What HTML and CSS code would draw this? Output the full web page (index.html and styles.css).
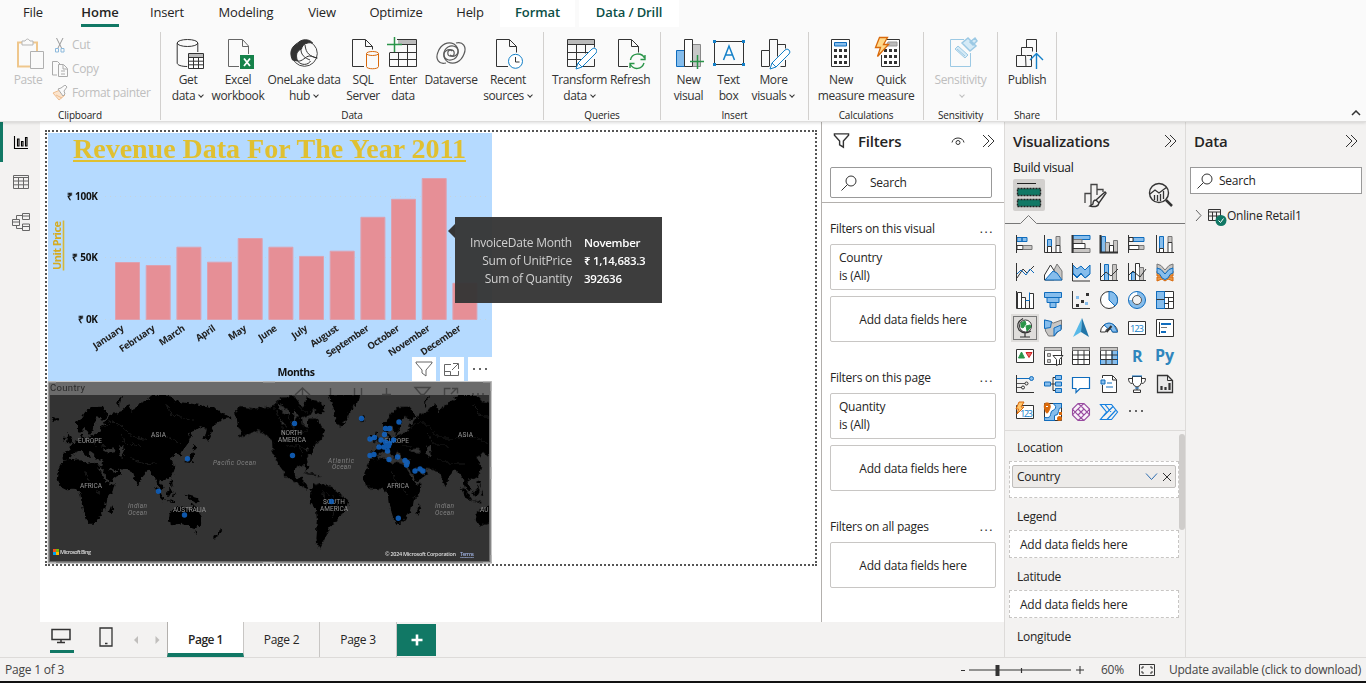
FILE: index.html
```
<!DOCTYPE html>
<html lang="en">
<head>
<meta charset="utf-8">
<title>Revenue report</title>
<link rel="stylesheet" href="styles.css">
</head>
<body>
<div class="app">
<header class="ribbon">
  <nav class="tabs">
    <span class="tab w66">File</span><span class="tab w68 active"><b>Home</b></span><span class="tab w66">Insert</span><span class="tab w92">Modeling</span><span class="tab w60">View</span><span class="tab w88">Optimize</span><span class="tab w60">Help</span><span class="tab w75 context">Format</span><span class="tab w100 context">Data / Drill</span>
  </nav>
  <div class="groups">
    <section class="group g-clip">
      <div class="tools disabled">
        <div class="tool w56"><svg class="ic" viewBox="11 36 34 34"><path d="M22 42.500H18v24h12M33 42.500h4V51" stroke="#efc78d" stroke-width="2"/><path d="M22 45v-4h3q2.500-4 5 0h3v4z" stroke="#b5b5b5"/><path d="M30.500 51.500h13v17h-13z" stroke="#b0b0b0" fill="#fafafa"/></svg><span>Paste</span></div>
        <div class="mini">
          <div><svg class="mi" viewBox="52 36 16 16"><path d="M56.500 37l5 10M63 37l-5 10" stroke="#999"/><path d="M55.500 47.500h3v3.500h-3zM61 47.500h3v3.500h-3z" stroke="#8cb9dc"/></svg>Cut</div>
          <div><svg class="mi" viewBox="52 60 16 16"><path d="M57 74h-4.500V60.500h5l3 3M58.500 63.500h5l4 4v8h-9zM63 64v4h4M61 70h4M61 73h4" stroke="#aaa"/></svg>Copy</div>
          <div><svg class="mi" viewBox="52 84 16 16"><path d="M53 92l7-3 5 5-6 5zM56 94l6 3" stroke="#efbd8e" fill="#fbe4cd"/><path d="M58 88l3-1 4-3 2 2-3 4 1 3-2 2z" stroke="#aaa" fill="#fafafa"/></svg>Format painter</div>
        </div>
      </div>
      <footer>Clipboard</footer>
    </section>
    <section class="group g-data">
      <div class="tools">
        <div class="tool w50"><svg class="ic" viewBox="172 36 34 34"><ellipse cx="188.500" cy="43" rx="10.300" ry="3.500"/><path d="M178.200 43v20c0 2 4 3.500 10 3.500M198.800 43v9"/><path d="M189.500 53.500h15v15h-15z" fill="#fff"/><path d="M190 54h14v3h-14z" fill="#bbb" stroke="none"/><path d="M189.500 57.500h15M189.500 61.200h15M189.500 64.800h15M194.500 57v11.500M199.500 57v11.500"/></svg><span>Get<br>data<i></i></span></div>
        <div class="tool w50"><svg class="ic" viewBox="221 36 34 34"><path d="M239 66.500h-10.500v-27h14l6 6.500v8M242.500 40v6.500h6" stroke="#666"/><path d="M240 55h14v14h-14z" fill="#15824a" stroke="none"/><path d="M244 58.500l6 7.500M250 58.500l-6 7.500" stroke="#fff" stroke-width="1.800"/></svg><span>Excel<br>workbook</span></div>
        <div class="tool w82"><svg class="ic" viewBox="288 36 34 34"><circle cx="305.500" cy="53.500" r="12.800" stroke="#444"/><path d="M293.500 60c-4-8 0-15 5-16 3-6 13-5 15-1-5-1-10 1-11 6-5 2-6 6-4 12z" fill="#333"/><path d="M302 47c-1 8 4 11 9 13M306 45c1 9 5 11 12 13M298.500 61c5 1 8-5 12-5 3 0 5 2 8 2M298.500 61c4 5 11 4 13 0"/></svg><span>OneLake data<br>hub<i></i></span></div>
        <div class="tool w36"><svg class="ic" viewBox="346 36 34 34"><path d="M364 66.500h-11.500v-27h13l7 7v3M365.500 40v6.500h7"/><g stroke="#d9690b" fill="#fafafa"><path d="M366.500 53.500v13c0 3 12 3 12 0v-13"/><ellipse cx="372.500" cy="53.500" rx="6" ry="2"/></g></svg><span>SQL<br>Server</span></div>
        <div class="tool w44"><svg class="ic" viewBox="386 36 34 34"><path d="M398 40h19v4h-19z" fill="#bbb" stroke="none"/><path d="M397 39.500h19.500v27h-27V53M397 44.500h19.500M389.500 52.500h27M389.500 59.500h27M398.500 52v14.500M407.500 44.500v22"/><path d="M394.500 37v15M387 44.500h15" stroke="#2a9549" stroke-width="1.500"/></svg><span>Enter<br>data</span></div>
        <div class="tool w52"><svg class="ic" viewBox="434 36 34 34"><g stroke="#5a5a5a" stroke-width="1.200"><path d="M446 63c-7 2-11-4-8-11 3-8 10-11 16-8 6 4 5 12 0 15-4 2-9 1-10-3-1-5 5-8 8-5"/><path d="M456 43c7-2 11 4 8 11-3 8-10 11-16 8-6-4-5-12 0-15 4-2 9-1 10 3 1 5-5 8-8 5"/><circle cx="451" cy="53" r="3.200"/></g></svg><span>Dataverse</span></div>
        <div class="tool w62"><svg class="ic" viewBox="491 36 34 34"><path d="M508 66.500h-11.500v-27h13l7 7v6M509.500 40v6.500h7"/><circle cx="515.500" cy="61.300" r="7" stroke="#1480c8" fill="#fff"/><path d="M515.500 57v5h4"/></svg><span>Recent<br>sources<i></i></span></div>
      </div>
      <footer>Data</footer>
    </section>
    <section class="group g-query">
      <div class="tools">
        <div class="tool w56"><svg class="ic" viewBox="563 36 34 34"><path d="M568 40h27v4h-27z" fill="#bbb" stroke="none"/><path d="M567.500 39.500h27v8M594.500 59v7.500h-27v-27M567.500 44.500h27M567.500 52.500h21M567.500 59.500h14M576.500 44.500v22M585.500 44.500v9"/><path d="M576 69l2-6 14-14q2-2 4 0t0 4l-14 14zM578 63l4 4" stroke="#1480c8" fill="#fff"/></svg><span>Transform<br>data<i></i></span></div>
        <div class="tool w45"><svg class="ic" viewBox="614 36 34 34"><path d="M629 66.500h-9.500v-27h13l7 7v6M632.500 40v6.500h7"/><path d="M631.500 60c1-7 11-8 14-2M646 55v4.500h-4.500M645 63c-2 6-10 8-14 1M631 68v-4.500h4.500" stroke="#2a9549" stroke-width="1.400"/></svg><span>Refresh</span></div>
      </div>
      <footer>Queries</footer>
    </section>
    <section class="group g-insert">
      <div class="tools">
        <div class="tool w40"><svg class="ic" viewBox="672 36 34 34"><path d="M676.500 50.500h8v16h-8z" fill="#86bdec" stroke="#0f6cbd"/><path d="M692.500 44.500h8v22h-8z" fill="#c8c8c8" stroke="#888"/><path d="M684.500 39.500h8v27h-8z" fill="#fff"/><path d="M697.500 55v14M690 61.500h14" stroke="#2a9549" stroke-width="1.500"/></svg><span>New<br>visual</span></div>
        <div class="tool w40"><svg class="ic" viewBox="712 36 34 34"><path d="M714.500 41.500h29v23h-29z"/><path d="M723.500 60l5.500-14 5.500 14M725.500 55h7" stroke="#1480c8" stroke-width="1.500"/><path d="M713 40h3v3h-3zM742 40h3v3h-3zM713 63h3v3h-3zM742 63h3v3h-3z" fill="#1480c8" stroke="none"/></svg><span>Text<br>box</span></div>
        <div class="tool w50"><svg class="ic" viewBox="757 36 34 34"><path d="M769 66.500h-7.500v-16h8v16M769.500 50.500v-11h8v17M777.500 44.500h8v4M785.500 60v6.500h-5"/><path d="M770 69l2-6 13-13q2-2 4 0t0 4l-13 13zM772 63l4 4" stroke="#1480c8" fill="#fff"/></svg><span>More<br>visuals<i></i></span></div>
      </div>
      <footer>Insert</footer>
    </section>
    <section class="group g-calc">
      <div class="tools">
        <div class="tool w50"><svg class="ic" viewBox="824 36 34 34"><path d="M831.500 39.500h18v27h-18z" fill="#fff"/><path d="M834.500 42.500h12v3.500h-12z" fill="#86bdec" stroke="#0f6cbd"/><path d="M834 50.500h13M834 56.500h13M834 62.500h13" stroke-width="3" stroke-dasharray="3 2"/></svg><span>New<br>measure</span></div>
        <div class="tool w50"><svg class="ic" viewBox="873 36 34 34"><path d="M884 39.500h14.500v27h-18V55" fill="#fff"/><path d="M887 42h9v4h-11z" fill="#bbb" stroke="#999"/><path d="M883 50.500h13M883 56.500h13M883 62.500h13" stroke-width="3" stroke-dasharray="3 2"/><path d="M878.500 37.500h8l-4 7h5l-11 12 3-9h-5z" fill="#ffd98a" stroke="#d9690b" stroke-width="1.300"/></svg><span>Quick<br>measure</span></div>
      </div>
      <footer>Calculations</footer>
    </section>
    <section class="group g-sens">
      <div class="tools disabled">
        <div class="tool w60"><svg class="ic" viewBox="943 36 34 34"><g stroke="#9cc9e4"><path d="M963 39.500h-13.500v27h20V53"/><path d="M954 49l10 9 3-3-10-9zM956 49l8 7" fill="#d5eaf6"/><path d="M961 43l8 8 6-5-8-8zM969 42l5-4 2 3-4 4zM962 42l5-4" fill="#d5eaf6" stroke-width="1.500"/></g></svg><span>Sensitivity<br><i></i></span></div>
      </div>
      <footer>Sensitivity</footer>
    </section>
    <section class="group g-share">
      <div class="tools">
        <div class="tool w52"><svg class="ic" viewBox="1010 36 34 34"><path d="M1026 66.500h-9.500v-11h9zM1021.500 55v-7.500h11v4M1026.500 47v-7.500h10V52M1026.500 55.500h5v11h-6"/><path d="M1036.500 69V54M1030 60l6.500-6.500 6.500 6.500" stroke="#1480c8" stroke-width="1.400"/></svg><span>Publish</span></div>
      </div>
      <footer>Share</footer>
    </section>
    <svg class="collapse" viewBox="0 0 10 6"><path d="M1 5l4-4 4 4"/></svg>
  </div>
</header>

<main class="body">
  <aside class="rail">
    <div class="rail-item on"><svg viewBox="0 0 18 18"><path d="M2.500 3v12.500H16M5.500 13V6H7v7zM9.500 13V8.500H11V13zM13.500 13V4.500H15V13z" stroke="#000" stroke-width="1.100"/></svg></div>
    <div class="rail-item"><svg viewBox="0 0 18 18"><path d="M1.500 2.500h15v13h-15zM1.500 4.500h15M1.500 8h15M1.500 11.800h15M6.500 4.500v11M11.500 4.500v11"/></svg></div>
    <div class="rail-item"><svg viewBox="0 0 18 18"><path d="M.5 6.500h7v6h-7zM.5 9h7M10.500.5h7v6h-7zM10.500 3h7M10.500 11h7v6.500h-7zM10.500 13.500h7M4.500 6.500v-4h6M4.500 12.500v3h6"/></svg></div>
  </aside>
  <div class="work">
    <div class="canvas">
      <div class="report">
        <div class="visual">
          <svg class="chart" viewBox="48 133 443 248">
            <g class="grid"><path d="M105 196.500H488M105 257.500H488M105 319.500H488"/></g>
            <text class="title" x="73" y="158" textLength="393">Revenue Data For The Year 2011</text>
            <path d="M73 161h393" stroke="#e0c030" stroke-width="2"/>
            <g class="ylab"><text x="98" y="200" textLength="31">₹ 100K</text><text x="98" y="261" textLength="26">₹ 50K</text><text x="98" y="323" textLength="20">₹ 0K</text></g>
            <g transform="rotate(-90 61 270)"><text class="unit" x="61" y="270" textLength="49">Unit Price</text><path d="M60.500 272.500h50" stroke="#d5b839" stroke-width="1.600"/></g>
            <g class="bars"><path d="M115.500 262.500h24v57h-24zM146.200 265.500h24v54h-24zM176.900 247.200h24v72.300h-24zM207.500 262.200h24v57.300h-24zM238.200 238.500h24v81h-24zM268.900 247.200h24v72.300h-24zM299.500 256.400h24v63.100h-24zM330.200 251.200h24v68.300h-24zM360.900 217.300h24v102.200h-24zM391.500 199.300h24v120.200h-24zM422.200 178.500h24v141h-24zM452.900 283.300h24v36.200h-24z"/></g>
            <g class="xlab">
              <text transform="translate(124.500 330) rotate(-34)">January</text><text transform="translate(155.500 330) rotate(-34)">February</text><text transform="translate(185.500 330) rotate(-34)">March</text><text transform="translate(216 330) rotate(-34)">April</text><text transform="translate(247 330) rotate(-34)">May</text><text transform="translate(277.500 330) rotate(-34)">June</text><text transform="translate(308 330) rotate(-34)">July</text><text transform="translate(339 330) rotate(-34)">August</text><text transform="translate(369.500 330) rotate(-34)">September</text><text transform="translate(400 330) rotate(-34)">October</text><text transform="translate(430.500 330) rotate(-34)">November</text><text transform="translate(461.500 330) rotate(-34)">December</text>
            </g>
            <text class="months" x="277.500" y="376" textLength="37.500">Months</text>
          </svg>
          <div class="vh"><span><svg viewBox="0 0 24 24"><path d="M4 5h16v1l-6 7v6l-4-3v-3L4 6z"/></svg></span><span><svg viewBox="0 0 24 24"><path d="M11 7.500H4.500v11h14V14M4.500 14.500h6v4M12 13l6-6M13 6.500h5.500V12"/></svg></span><span><svg viewBox="0 0 24 24"><path d="M5 12h2M11 12h2M17 12h2" stroke-width="2"/></svg></span></div>
        </div>
        <svg class="map" viewBox="47 380 446 185">
          <defs>
            <clipPath id="frame"><path d="M50 395h439v166H50z"/></clipPath>
            <filter id="coast" x="-5%" y="-5%" width="110%" height="110%"><feTurbulence baseFrequency=".16" numOctaves="2" seed="4"/><feDisplacementMap in="SourceGraphic" scale="5" xChannelSelector="R" yChannelSelector="G"/></filter>
            <g id="oldworld">
              <path d="M47 310L50 285 65 255 80 250 115 247 130 262 150 258 178 268 190 295 205 325 221 322 215 345 195 372 190 400 170 430 155 443 140 443 130 420 122 380 118 350 100 338 75 340 55 330z"/>
              <path d="M65 250L65 228 85 222 88 205 115 190 122 172 132 185 150 178 175 168 188 145 210 115 240 105 262 80 270 110 285 90 310 75 335 56 385 56 400 75 430 80 480 88 520 95 550 112 572 126 545 130 525 140 512 165 500 194 488 185 495 155 475 150 455 165 438 172 447 190 430 215 418 240 405 228 395 240 385 245 400 270 390 300 370 308 355 315 368 335 365 345 350 330 345 310 330 290 320 280 305 300 290 330 280 310 272 285 250 278 228 275 240 292 205 318 180 270 185 252 155 245 162 235 145 222 140 232 152 248 140 244 120 222 105 228 90 238 85 252z"/>
              <path d="M108 168L108 142 130 110 150 93 185 92 202 118 190 132 170 120 158 140 155 160 142 176 130 152 118 170z"/>
              <path d="M75 198L80 166 90 185 93 200zM66 196L64 182 74 182zM35 135L33 125 50 123 52 133zM430 256L445 248 453 225 460 235 452 258zM452 222L458 202 470 212zM338 335L362 372 370 368 346 333zM372 350L390 332 392 345 382 362zM400 345L395 362 403 358zM432 356L468 366 474 380 448 374zM362 372L400 374 400 379zM385 318L392 310 396 332zM380 435L383 410 400 400 420 388 437 392 447 405 455 382 467 402 482 422 476 448 458 460 440 446 420 440 395 448zM460 466L468 466 464 474zM536 456L544 466 532 478zM532 472L522 488 516 484zM203 408L212 385 217 395 208 416zM447 155L452 180 446 195 442 170zM230 90Q225 75 240 62L243 65Q232 78 235 92z"/>
              <path class="sea" d="M184 222Q205 208 221 222L214 230 195 228zM235 211L246 208 248 236 240 246 234 228zM176 270L202 314 197 318 172 276zM207 273L229 289 224 293 205 279zM163 145L157 167 162 172 170 149z"/>
              <path class="river" d="M185 155l30-20 28 15 25 30 45 10 40-15 30 10 32 15M240 170l10 30 50 10M130 280l20 60M165 340l15 20M265 245l40 18 45-2M375 82l20 35 60 15M150 190l18 22 25-4"/>
            </g>
          </defs>
          <path d="M48 381h443v183H48z" fill="#6b6b6b"/>
          <path d="M50 395h439v166H50z" fill="#333"/>
          <g clip-path="url(#frame)">
            <g filter="url(#coast)"><g transform="translate(40 375) scale(.33333)">
              <use href="#oldworld"/><use href="#oldworld" x="921"/>
              <path d="M582 106L600 90 640 98 690 92 720 62 760 60 785 95 800 60 820 90 805 115 780 125 782 148 800 152 806 125 825 125 848 160 844 185 820 205 812 228 797 248 803 278 796 284 790 268 765 270 758 290 770 308 785 302 784 318 805 334 800 340 770 325 735 300 710 262 695 230 693 190 670 172 645 162 615 178 590 180 603 165 588 150z"/>
              <path d="M862 55H955L948 80 925 110 903 152 887 145 878 105zM808 345L816 325 835 320 870 330 895 352 922 370 915 400 895 418 880 440 862 460 852 482 836 512 841 517 830 513 823 490 828 430 825 405 806 372zM795 65L845 80 850 100 835 120 815 100zM789 286L824 294 822 298 793 290zM827 296L840 300 830 303z"/>
              <path class="sea" d="M705 80l25 12 12 22-16-5zM712 128l18 10 5 14-12-8zM755 98l16 22-12 14zM730 100l12-4 5 25zM780 212l22 8-6 6z"/>
              <path class="river" d="M700 95l20 45 10 50M735 210l40 0 10 35M860 350l30 30-20 50M845 345l10 50M740 120l25 60 35-20M770 90l30 20"/>
            </g></g>
            <g class="land"><text x="78" y="443" textLength="24">EUROPE</text><text x="151" y="437" textLength="15">ASIA</text><text x="80" y="488" textLength="22">AFRICA</text><text x="173" y="512" textLength="33">AUSTRALIA</text><text x="281" y="435" textLength="21">NORTH</text><text x="278" y="442" textLength="28">AMERICA</text><text x="323" y="504" textLength="22">SOUTH</text><text x="320" y="511" textLength="28">AMERICA</text><text x="385" y="443" textLength="24">EUROPE</text><text x="458" y="437" textLength="15">ASIA</text><text x="387" y="488" textLength="22">AFRICA</text><text x="480" y="512" textLength="8.500">AU</text></g>
            <g class="ocean"><text x="213" y="465" textLength="43">Pacific Ocean</text><text x="128" y="508" textLength="19">Indian</text><text x="128" y="515" textLength="19">Ocean</text><text x="328" y="463" textLength="26">Atlantic</text><text x="332" y="469" textLength="19">Ocean</text><text x="435" y="508" textLength="19">Indian</text><text x="435" y="515" textLength="19">Ocean</text></g>
            <path class="dots" d="M187.500 458.700h0M158.500 491.200h0M184.500 515h0M294.500 423.500h0M292.500 455.500h0M331.500 501.500h0M398.300 518.300h0M361.500 418.500h0M399 422h0M385.500 428.500h0M389.500 428.500h0M384.500 434.500h0M370 439h0M374.500 437.500h0M381 440h0M385.500 442h0M393.500 440h0M389.500 443.500h0M379 447h0M384 447h0M388.500 446h0M387.500 451h0M370 455.500h0M374 454.500h0M389 459.500h0M397.500 457h0M405 460.500h0M407.300 462.500h0M406.500 465h0M415 471h0M420 469h0M423 471h0"/>
            <path d="M53 549h3v3h-3z" fill="#f25022"/><path d="M56 549h3v3h-3z" fill="#7fba00"/><path d="M53 552h3v3h-3z" fill="#00a4ef"/><path d="M56 552h3v3h-3z" fill="#ffb900"/>
            <text class="credit" x="60" y="554" textLength="31">Microsoft Bing</text><text class="credit" x="385" y="556" textLength="71">© 2024 Microsoft Corporation</text><text class="credit terms" x="460" y="556" textLength="14">Terms</text>
          </g>
          <g class="ghost"><path d="M302.500 395v-7M295 395l7.500-7 7.500 7M330.500 388v7M354.500 388v7M361.500 388v7M386.500 388v7M382 394.500h9M415 387.500h15l-6 7h-3zM444.500 395v-6.500h6M451 394l6-6M452 388.500h5.500v5M472 394h2M477 394h2M482 394h2"/></g>
          <text class="country" x="50" y="391" textLength="35">Country</text>
          <path d="M48 381.500h443.500v182H48z" fill="none" stroke="#c8c8c8"/>
          <path class="thick" d="M490.500 382v181M48 562.500h443" stroke="#858585"/>
          <path class="handles" d="M48 382h8M263 382h12M483 382h9M48 562.500h8M263 562.500h12M483 562.500h9M491 383v8M491 467v12M491 555v8" stroke="#aaa"/>
        </svg>
        <div class="tip"><span>InvoiceDate Month</span><b>November</b><span>Sum of UnitPrice</span><b>₹ 1,14,683.3</b><span>Sum of Quantity</span><b>392636</b></div>
      </div>
    </div>
    <aside class="filters">
      <div class="phead"><svg class="fun" viewBox="0 0 18 18"><path d="M1.500 2h15v1.500l-5.500 6V16l-4-2.500v-4l-5.500-6z"/></svg><h2>Filters</h2><svg class="eye" viewBox="0 0 14 10"><path d="M1 6.500c1-6 11-6 12 0"/><circle cx="7" cy="6.500" r="2"/></svg><svg class="chev" viewBox="0 0 14 14"><path d="M2 1l6 6-6 6M7 1l6 6-6 6"/></svg></div>
      <div class="search fs"><svg viewBox="0 0 16 16"><circle cx="10" cy="6" r="5"/><path d="M6.500 9.500L.5 15.500"/></svg>Search</div>
      <div class="sections">
        <h3>Filters on this visual<span>...</span></h3><div class="card two">Country<br>is (All)</div><div class="card">Add data fields here</div>
        <h3>Filters on this page<span>...</span></h3><div class="card two">Quantity<br>is (All)</div><div class="card">Add data fields here</div>
        <h3>Filters on all pages<span>...</span></h3><div class="card">Add data fields here</div>
      </div>
    </aside>
    <div class="pages">
      <div class="device mon"><svg viewBox="0 0 20 16"><path d="M1 1.500h18v10H1z" stroke-width="1.500"/><path d="M10 12v2M6 14.500h8" stroke-width="1.500"/></svg></div>
      <div class="device ph"><svg viewBox="0 0 14 20"><path d="M1 1h12v18H1z" stroke-width="1.300"/><path d="M6 16.500h2.500" stroke-width="1.500"/></svg></div>
      <svg class="arr" viewBox="0 0 28 8"><path d="M5 0v8L1 4zM22.500 0v8l4-4z"/></svg>
      <div class="page on">Page 1</div><div class="page">Page 2</div><div class="page">Page 3</div><div class="add"><svg viewBox="0 0 12 12"><path d="M6 .5v11M.5 6h11" stroke="#fff" stroke-width="2.600"/></svg></div>
    </div>
  </div>

  <aside class="viz">
    <div class="phead"><h2>Visualizations</h2><svg class="chev" viewBox="0 0 14 14"><path d="M2 1l6 6-6 6M7 1l6 6-6 6"/></svg></div>
    <div class="build">Build visual</div>
    <div class="modes">
      <span class="mode on"><svg viewBox="0 0 32 32"><path d="M4 4.500h19" stroke="#222"/><path d="M4.500 9.500h23v7h-23zM4.500 20.500h23v7h-23z" fill="#117865" stroke="#222" stroke-width="1.400" stroke-dasharray="2 1"/></svg></span>
      <span class="mode"><svg viewBox="0 0 32 32"><path d="M6 24V14.500h6V24M12 14V5.500h6V16M18 10.500h6V13M12 16v10h2" stroke="#444" stroke-width="1.300"/><path d="M26 13l-9 8 3 3 7-10zM17 21q-3 0-3 4l-3 2q8 2 9-3" stroke="#333" fill="#f3f2f1" stroke-width="1.400"/></svg></span>
      <span class="mode"><svg viewBox="0 0 32 32"><circle cx="14" cy="14" r="9.500" stroke="#333" stroke-width="1.400"/><path d="M5 15l5-4 4 3 8-6M9.500 21v-5M12.500 22v-6M15.500 22v-7M18.500 20v-8" stroke="#333" stroke-width="1.300"/><path d="M21 21l6 6" stroke="#333" stroke-width="2.500"/></svg></span>
    </div>
    <svg class="caret" viewBox="0 0 180 10"><path d="M0 9.500h15.500l8-8 8 8H180"/></svg>
    <div class="gallery">
      <svg viewBox="0 0 28 28"><path class="b" d="M6 7.500h5v4H6zM11 7.500h5v4h-5z"/><path class="w" d="M6 15.500h6v4H6z"/><path class="g" d="M12 15.500h9v4h-9z"/><path d="M5.500 5v18"/></svg>
      <svg viewBox="0 0 28 28"><path class="b" d="M8.500 9.500h4v7h-4z"/><path class="g" d="M17 6.500h4v9h-4z"/><path class="w" d="M8.500 16.500h4v6h-4zM17 15.500h4v7h-4z"/><path d="M5.500 5v17.500H23"/></svg>
      <svg viewBox="0 0 28 28"><path class="b" d="M6 5.500h17v4H6z"/><path class="g" d="M6 9.500h9v4H6zM6 18.500h17v4H6z"/><path class="w" d="M6 13.500h12v5H6z"/><path d="M5.500 5v18" stroke-width="2"/></svg>
      <svg viewBox="0 0 28 28"><path class="b" d="M6.500 6.500h4v16h-4z"/><path class="g" d="M10.500 12.500h4v10h-4zM18.500 10.500h4v12h-4z"/><path class="w" d="M14.500 15.500h4v7h-4z"/><path d="M5.500 5v17.500H23" stroke-width="2"/></svg>
      <svg viewBox="0 0 28 28"><path class="b" d="M10 7.500h11v4H10z"/><path class="w" d="M6 7.500h4v4H6zM6 15.500h10v4H6z"/><path class="g" d="M16 15.500h5v4h-5z"/><path d="M5.500 5v18"/></svg>
      <svg viewBox="0 0 28 28"><path class="b" d="M8.500 6.500h4v12h-4z"/><path class="g" d="M17 6.500h4v6h-4z"/><path class="w" d="M8.500 18.500h4v4h-4zM17 12.500h4v10h-4z"/><path d="M5.500 5v17.500H23"/></svg>

      <svg viewBox="0 0 28 28"><path d="M5.500 5v18M6 20l6-9 4 4 7-7"/><path d="M6 16l4-4 5 5 4-6 4 4" stroke="#0f6cbd"/></svg>
      <svg viewBox="0 0 28 28"><path class="g" d="M14 14l4-8 5 7v9h-9z"/><path class="w" d="M5.500 17l6-10 7 11-4 4h-9z"/><path class="b" d="M6 22l8-9 4 2 5 7z"/></svg>
      <svg viewBox="0 0 28 28"><path class="b" d="M6 7l4 4 4-3 4 4 5-5v9l-5 4-4-5-4 4-4-4z"/><path d="M5.500 5v18H23"/><path d="M6 16l4 4 4-4 4 4 5-4" stroke="#0f6cbd"/></svg>
      <svg viewBox="0 0 28 28"><path class="b" d="M9.500 6.500h4v16h-4z"/><path class="g" d="M17.500 6.500h4v16h-4z"/><path d="M5.500 5v17.500H23M6 19l5-5 5 4 7-7"/></svg>
      <svg viewBox="0 0 28 28"><path class="b" d="M8.500 14.500h4v8h-4z"/><path class="w" d="M12.500 5.500h4v17h-4z"/><path class="g" d="M16.500 9.500h4v13h-4z"/><path d="M5.500 5v17.500H23M6 17l4-4 7 6 6-8"/></svg>
      <svg viewBox="0 0 28 28"><path d="M6 19h16v4l-5-2-3 2-3-2-5 2zM6 13h16v5H6z" fill="#e89a4a" stroke="#d9690b"/><path class="g" d="M6 6q4 0 8 6 4-6 8-6v4q-4 0-8 6-4-6-8-6z"/><path class="b" d="M6 10q4 0 8 6 4-6 8-6v5q-3 0-5 5-3 3-6 0-2-5-5-5z"/></svg>

      <svg viewBox="0 0 28 28"><path class="w" d="M6.500 6.500h4v16h-4zM10.500 11.500h4v11h-4zM18.500 7.500h4v15h-4z"/><path d="M5.500 5v17.500H23"/><path d="M14.500 14.500h4v-8" stroke="#0f6cbd"/></svg>
      <svg viewBox="0 0 28 28"><path class="b" d="M5.500 6.500h17v5h-17zM8 11.500h12v5H8zM11 16.500h6v5h-6z"/></svg>
      <svg viewBox="0 0 28 28"><path d="M5.500 5v17.500H23"/><path d="M9 10h3v3H9zM18 16h3v3h-3z" fill="#86bdec" stroke="none"/><path d="M14 14h3v3h-3zM19 7h3v3h-3zM9 18h3v3H9z" fill="#333" stroke="none"/></svg>
      <svg viewBox="0 0 28 28"><circle class="w" cx="14" cy="14" r="8.500"/><path class="b" d="M14 5.500a8.500 8.500 0 0 1 6 14.500l-6-6z"/></svg>
      <svg viewBox="0 0 28 28"><circle cx="14" cy="14" r="6.500" stroke="#86bdec" stroke-width="4"/><path d="M7.500 14a6.500 6.500 0 0 1 6.500-6.500" stroke="#fff" stroke-width="4"/><circle cx="14" cy="14" r="8.500" stroke="#0f6cbd"/><circle cx="14" cy="14" r="4.500" stroke="#555"/></svg>
      <svg viewBox="0 0 28 28"><path class="w" d="M5.500 5.500h17v17h-17z"/><path class="b" d="M5.500 5.500h8v17h-8z"/><path d="M5.500 13.500h8M13.500 11.500h9M17.500 11.500v11M13.500 17.500h4M17.500 15.500h5"/></svg>

      <svg class="picked" viewBox="0 0 28 28"><circle class="w" cx="14.500" cy="12" r="6"/><path d="M10 9l4-2 1 3-3 4-2-1zM15 12l4-1 1 2-4 4z" fill="#2a9549" stroke="#2a9549"/><path d="M12 4.500Q4 9 8 16q5 5 12 1M14 19v3.500M9 23h10" stroke-width="1.200"/></svg>
      <svg viewBox="0 0 28 28"><path class="g" d="M5.500 6l9 3 8-3v9l-4 3-3 4h-6l-3-5z"/><path class="b" d="M5.500 6l7 1.500-1 6-6 1zM15 14l7-3v5l-4 2-3 4z"/></svg>
      <svg viewBox="0 0 28 28"><path d="M15 4L6 23l8-5z" fill="#58b9e8" stroke="none"/><path d="M15 4l7 19-8-5z" fill="#2276a8" stroke="none"/></svg>
      <svg viewBox="0 0 28 28"><path class="w" d="M5.500 18a8.500 8.500 0 0 1 17 0h-5a3.500 3.500 0 0 0-7 0z"/><path class="b" d="M9 11q5-4 10 0l3.500 7h-5q-1-4-4-3z"/><path d="M11.500 18l5-6" stroke-width="2"/></svg>
      <svg viewBox="0 0 28 28"><path class="w" d="M5.500 7.500h17v13h-17z"/><text class="num" x="7" y="18" textLength="14">123</text></svg>
      <svg viewBox="0 0 28 28"><path class="w" d="M5.500 5.500h17v17h-17z"/><path d="M8.500 8v12"/><path d="M10 10h10M10 18h5" stroke="#0f6cbd" stroke-width="2"/><path d="M10 13.500h6" stroke="#777"/></svg>

      <svg viewBox="0 0 28 28"><path class="w" d="M5.500 7.500h17v13h-17z"/><path d="M7.500 16l3-6 3 6z" fill="#2a9549" stroke="#2a9549"/><path d="M15 10.500h6l-3 5z" fill="#e66" stroke="#c22"/></svg>
      <svg viewBox="0 0 28 28"><path class="w" d="M5.500 5.500h17v17h-17z"/><path class="g" d="M5.500 5.500h17v3h-17zM8.500 11.500h3v3h-3zM8.500 17.500h3v3h-3z"/><path d="M14 13.500h10l-3.500 4V22l-3 1.500v-6z" fill="#fff"/></svg>
      <svg viewBox="0 0 28 28"><path class="w" d="M5.500 5.500h17v17h-17z"/><path class="g" d="M5.500 5.500h17v3h-17z"/><path d="M5.500 13h17M5.500 17.500h17M11 8.500v14M17 8.500v14"/></svg>
      <svg viewBox="0 0 28 28"><path class="w" d="M5.500 5.500h17v17h-17z"/><path class="b" d="M17 8.500h5.500v14h-17V17.500H17z"/><path class="g" d="M5.500 5.500h17v3h-17z"/><path d="M5.500 13h17M5.500 17.500h17M11 8.500v14M17 8.500v14M5.500 22.500h17"/></svg>
      <svg viewBox="0 0 28 28"><text class="let" x="9" y="19.500" textLength="9">R</text></svg>
      <svg viewBox="0 0 28 28"><text class="let" x="4" y="18.500" textLength="19">Py</text></svg>

      <svg viewBox="0 0 28 28"><path d="M5.500 5v17.500H23"/><path d="M6 8.500h13" stroke="#0f6cbd"/><circle class="b" cx="20.500" cy="8.500" r="2"/><path d="M6 13.500h8M6 17.500h5" stroke="#555"/><circle cx="15.500" cy="13.500" r="1.500"/><circle cx="12" cy="17.500" r="1.500"/></svg>
      <svg viewBox="0 0 28 28"><path d="M11 14h6M17 7.500h-3v13h3"/><path class="b" d="M5.500 12h6v4h-6zM16.500 5.500h6v4h-6zM16.500 12h6v4h-6zM16.500 18.500h6v4h-6z"/></svg>
      <svg viewBox="0 0 28 28"><path d="M5.500 7.500h17v11H13l-4 4v-4H5.500z" fill="#fff" stroke="#0f6cbd" stroke-width="1.200"/></svg>
      <svg viewBox="0 0 28 28"><path d="M7.500 8V5.500h10l4 4v13h-14V15M17.500 6v4h4" fill="#fff"/><path class="b" d="M6 10h4v4H6z"/><path d="M12 13h5M11 17h7" stroke="#0f6cbd"/></svg>
      <svg viewBox="0 0 28 28"><path class="w" d="M9.500 6.500h9v6q-1 4-4.500 4.500-3.500-.5-4.500-4.500zM9 8.500H5.500q0 5 4 5M19 8.500h3.500q0 5-4 5M14 17v3M10.500 20h7v2.500h-7z"/><path d="M9 6h10M12 18h4" stroke="#0f6cbd"/></svg>
      <svg viewBox="0 0 28 28"><path d="M6.500 5.500h10l5 5v12h-15z" fill="#e8e8e8" stroke-width="1.300"/><path d="M16.500 5.500v5h5"/><path d="M10.500 20v-4M14.500 20v-3M18.500 20v-7" stroke-width="2.200"/></svg>

      <svg viewBox="0 0 28 28"><path class="w" d="M5.500 7.500h17v13h-17z"/><text class="num" x="9" y="18.500" textLength="13">123</text><path d="M8 4h5l-3 5h3l-7 7 1.500-5H5z" fill="#ffc56b" stroke="#d9690b"/></svg>
      <svg viewBox="0 0 28 28"><path class="w" d="M5.500 5.500h17v17h-17z"/><path class="b" d="M14 5.500h8.500v4q-3 0-3 4t-4 4v5h-10v-3q6 1 6-3t4-5q3-3-1.500-6z"/><path d="M7.500 15q-4-7-1-10h3q4 3-1 10z" fill="#d9690b" stroke="#d9690b"/><path d="M7 8.500h2" stroke="#fff"/><circle cx="20.500" cy="20.500" r="2.500" fill="#d9690b" stroke="none"/><path d="M20 14h3v3h-3z" fill="#d9690b" stroke="none"/></svg>
      <svg viewBox="0 0 28 28"><path d="M11 5.500h6l5.500 5.500v6L17 22.500h-6L5.500 17v-6zM14 8l6 6-6 6-6-6zM11 11l6 6M17 11l-6 6M11 5.500l3 2.500 3-2.500M22.500 11L20 14l2.500 3M17 22.500L14 20l-3 2.500M5.500 17L8 14l-2.500-3" stroke="#984aa0" stroke-width="1.100" fill="#faf2fa"/></svg>
      <svg viewBox="0 0 28 28"><path d="M5.500 6.500h11l6 7.500-6 7.500h-11L11.500 14zM10 6.500l6 7.500M8.500 18L18 8.500M12 21.500l8.500-9" stroke="#1480e0" stroke-width="1.200"/></svg>
      <svg viewBox="0 0 28 28"><path d="M6 13h2M12 13h2M18 13h2" stroke="#666" stroke-width="2"/></svg>
    </div>
    <div class="wells">
      <h4>Location</h4><div class="well tall"><div class="chip">Country<svg viewBox="0 0 26 10"><path d="M1 1.500l5.500 6 5.500-6" stroke="#2b6cb0"/><path d="M18 1l8 8M26 1l-8 8"/></svg></div></div>
      <h4>Legend</h4><div class="well">Add data fields here</div>
      <h4>Latitude</h4><div class="well">Add data fields here</div>
      <h4>Longitude</h4>
      <div class="scroll"></div>
    </div>
  </aside>
  <aside class="data">
    <div class="phead"><h2>Data</h2><svg class="chev" viewBox="0 0 14 14"><path d="M2 1l6 6-6 6M7 1l6 6-6 6"/></svg></div>
    <div class="search ds"><svg viewBox="0 0 16 16"><circle cx="10" cy="6" r="5"/><path d="M6.500 9.500L.5 15.500"/></svg>Search</div>
    <div class="table"><svg viewBox="0 0 32 20"><path d="M1 4l5 5.500L1 15" stroke="#666"/><path d="M13.500 3.500h12v11h-12zM13.500 6h12M13.500 10h12M17.500 6v8M21.500 6v8"/><circle cx="26" cy="14.500" r="5.500" fill="#117865" stroke="none"/><path d="M23.500 14.500l2 2 3-4" stroke="#fff"/></svg>Online Retail1</div>
  </aside>
</main>
<footer class="status"><span class="pg">Page 1 of 3</span><svg class="slider" viewBox="0 0 124 12"><path d="M1 6.500h4"/><path d="M9 6h102M61.500 4v5" stroke-width="1.200"/><path d="M37.500 1v11" stroke-width="4"/><path d="M116 6h8M120 2v8"/></svg><span class="zoom">60%</span><svg class="fit" viewBox="0 0 16 12"><path d="M.5.500h15v11H.5z"/><path d="M3 5V3h2M11 3h2v2M13 7v2h-2M5 9H3V7"/></svg><span class="upd">Update available (click to download)</span></footer>
</div>
</body>
</html>
```
FILE: styles.css
```
* { box-sizing: border-box; }
body { margin: 0; font: 12px/18px "Open Sans", "Noto Sans", sans-serif; letter-spacing: -.24px; color: #252423; background: #f3f2f1; overflow: hidden; }
h2, h3, h4 { margin: 0; font-weight: 400; }
svg { display: block; fill: none; stroke: #333; flex: none; }
svg text { stroke: none; }
.app { width: 1366px; height: 683px; display: flex; flex-direction: column; }

/* ribbon */
.ribbon { height: 122px; background: #fafafa; border-bottom: 1px solid #dedddc; box-shadow: 0 1px 3px #0002; position: relative; z-index: 1; }
.tabs { display: flex; height: 27px; }
.tab { text-align: center; font-size: 13px; line-height: 25px; letter-spacing: -.2px; }
.tab.active b { display: inline-block; height: 27px; border-bottom: 3px solid #117865; font-weight: 600; letter-spacing: 0; }
.tab.context { background: #fff; color: #0b4f46; font-weight: 600; letter-spacing: -.1px; }
.tab.w100 { margin-left: 4px; }
.w36 { width: 36px; } .w40 { width: 40px; } .w44 { width: 44px; } .w45 { width: 45px; } .w50 { width: 50px; } .w52 { width: 52px; } .w56 { width: 56px; } .w60 { width: 60px; } .w62 { width: 62px; } .w66 { width: 66px; } .w68 { width: 68px; } .w75 { width: 75px; } .w82 { width: 82px; } .w88 { width: 88px; } .w92 { width: 92px; } .w100 { width: 100px; }
.groups { display: flex; padding-top: 5px; }
.group { height: 88px; border-right: 1px solid #d2d0ce; display: flex; flex-direction: column; justify-content: space-between; }
.group footer { text-align: center; font-size: 10px; line-height: 9px; letter-spacing: -.15px; }
.g-clip { width: 161px; } .g-data { width: 383px; } .g-query { width: 117px; } .g-insert { width: 148px; } .g-calc { width: 115px; } .g-sens { width: 74px; } .g-share { width: 59px; }
.tools { display: flex; padding-top: 4px; justify-content: center; white-space: nowrap; letter-spacing: -.38px; color: #333; }
.g-clip .tools { justify-content: flex-start; }
.g-data .tools, .g-insert .tools { padding-right: 2px; }
.tool { display: flex; flex-direction: column; align-items: center; text-align: center; line-height: 16px; }
.tool span { padding-top: 2px; }
.ic { width: 34px; height: 34px; }
.tool i { display: inline-block; width: 4px; height: 4px; margin: 0 1px 3px 4px; border: solid; border-width: 0 1.500px 1.500px 0; transform: rotate(45deg); }
.tools.disabled { color: #bebebe; }
.mini { line-height: 24px; margin-top: -3px; }
.mini div { display: flex; align-items: center; gap: 4px; margin-left: -4px; }
.mi { width: 16px; height: 16px; }
.collapse { width: 10px; height: 6px; margin: 78px 0 0 294px; stroke-width: 1.500; }

/* body */
.body { height: 535px; display: flex; }
.rail { width: 40px; }
.rail-item { height: 40px; display: grid; place-items: center; border-left: 3px solid transparent; padding-right: 2px; }
.rail-item.on { border-color: #117865; }
.rail-item svg { width: 18px; height: 18px; stroke: #666; }
.work { width: 964px; display: grid; grid-template: 500px 35px / 781px 183px; }
.canvas { background: #fff; padding: 8px 0 0 5px; }
.report { width: 772px; height: 436px; border: 2px dotted #555; position: relative; padding: 1px; }
.visual { width: 444px; height: 248px; background: #b5daff; position: relative; }
.chart { width: 443px; height: 248px; }
.title { font: bold 28px "Liberation Serif", serif; fill: #e0c030; letter-spacing: 0; }
.ylab text { font: 700 10px "Open Sans", sans-serif; fill: #111; text-anchor: end; letter-spacing: 0; }
.grid path { stroke: #c5d3de; stroke-dasharray: 1 4; }
.unit { font: 700 11px "Open Sans", sans-serif; fill: #d5ab20; letter-spacing: 0; }
.bars path { fill: #e68f96; stroke: #dda1b0; }
.xlab text { font: 700 9.500px "Open Sans", sans-serif; fill: #222; text-anchor: end; letter-spacing: -.3px; }
.months { font: 700 10.500px "Open Sans", sans-serif; fill: #111; letter-spacing: 0; }
.vh { position: absolute; right: 0; bottom: 0; display: flex; gap: 4px; }
.vh span { background: #fff; width: 24px; height: 24px; }
.vh svg { stroke: #666; }
.map { width: 446px; height: 185px; margin: -1px 0 0 -1px; }
.map > g > g > g path, #oldworld path { fill: #000; stroke: none; }
.map > path, .map > g > path { stroke-width: 0; }
.map > path[stroke] { stroke-width: 1; }
.map .thick { stroke-width: 2; }
.map .handles { stroke-width: 3; }
.map .ghost path { stroke: #444; stroke-width: 1.400; }
.map .sea { fill: #333 !important; }
.map .river { fill: none !important; stroke: #292929 !important; stroke-width: 2; }
.land text { font: 6.500px Roboto, sans-serif; fill: #969696; letter-spacing: 0; }
.ocean text { font: italic 6.500px Roboto, sans-serif; fill: #808080; letter-spacing: 0; }
.map .dots { stroke: #1163c1; stroke-width: 5.400; stroke-linecap: round; opacity: .88; }
.credit { font: 600 5.500px "Open Sans", sans-serif; fill: #ddd; letter-spacing: 0; }
.terms { fill: #9dafdd; text-decoration: underline; }
.country { font: 9.500px Roboto, sans-serif; fill: #292929; letter-spacing: 0; }
.tip { position: absolute; left: 408px; top: 85px; width: 207px; height: 86px; background: #353535f5; color: #d0d0d0; display: grid; grid-template-columns: 117px 1fr; column-gap: 12px; align-content: start; padding-top: 17px; }
.tip span { text-align: right; }
.tip b { color: #fff; font-weight: 600; font-size: 11.500px; letter-spacing: -.3px; }
.tip::before { content: ""; position: absolute; left: -7px; top: 7px; border: solid transparent; border-width: 7px 7px 7px 0; border-right-color: #353535; }

/* panes */
.phead { display: flex; align-items: center; height: 38px; }
.phead h2 { font-size: 15px; font-weight: 600; letter-spacing: -.2px; flex: 1; }
.chev { width: 14px; height: 14px; }
.filters { background: #fff; border-left: 1px solid #b3b0ad; }
.filters .phead { padding: 0 9px 8px 11px; height: 45px; }
.fun { width: 17px; height: 17px; margin-right: 8px; stroke-width: 1.500; }
.eye { width: 14px; height: 10px; margin-right: 16px; }
.search { display: flex; align-items: center; background: #fff; border: 1px solid #999; }
.search svg { width: 16px; height: 16px; }
.fs { width: 162px; height: 31px; margin-left: 8px; padding-left: 10px; gap: 13px; border-radius: 2px; }
.sections { margin-top: 4px; border-top: 1px solid #b3b0ad; padding: 14px 8px 0; }
.sections h3 { display: flex; justify-content: space-between; font-size: 12px; line-height: 23px; height: 22px; margin-bottom: 5px; padding-right: 2px; }
.sections h3 span { letter-spacing: 1.600px; }
.card { width: 166px; height: 46px; border: 1px solid #c8c6c4; border-radius: 2px; display: grid; place-items: center; margin-bottom: 6px; padding-top: 2px; }
.card + h3 { margin-top: 24px; }
.card.two { display: block; padding: 4px 8px; }
.pages { grid-column: 1 / 3; display: flex; align-items: flex-start; }
.device svg { stroke: #333; }
.mon { width: 24px; height: 31px; margin-left: 10px; padding: 6px 1px 0; border-bottom: 3px solid #117865; }
.mon svg { width: 20px; height: 16px; }
.ph { margin: 5px 0 0 25px; }
.ph svg { width: 14px; height: 20px; }
.arr { width: 28px; height: 8px; margin: 14px 6px 0 20px; fill: #c0bebc; stroke: none; }
.arr + .page { border-left: 1px solid #b3b0ad; width: 77px; }
.page { width: 76px; height: 35px; text-align: center; line-height: 35px; border-right: 1px solid #c8c6c4; }
.page.on { background: #fff; border-bottom: 4px solid #117865; font-weight: 600; letter-spacing: -.5px; }
.page:nth-child(6) { width: 77px; }
.add { width: 39px; height: 32px; margin-top: 2px; background: #117865; display: grid; place-items: center; }
.add svg { width: 12px; height: 12px; }
.viz { width: 181px; border-left: 1px solid #dddbd9; }
.viz .phead { padding: 0 8px; }
.build { padding-left: 8px; line-height: 16px; color: #111; }
.modes { display: flex; justify-content: space-between; padding: 3px 8px 0; height: 35px; }
.mode { width: 32px; height: 32px; }
.mode.on { background: #d2d0ce; border-radius: 2px; }
.caret { width: 180px; height: 10px; margin-top: 3px; stroke: #777; }
.gallery { display: grid; grid-template-columns: repeat(6, 28px); grid-auto-rows: 28px; margin: 6px 0 0 6px; height: 200px; }
.gallery svg { width: 28px; height: 28px; stroke: #333; }
.gallery .picked { background: #dfdddb; outline: 1px solid #777; outline-offset: -3px; }
.b { fill: #86bdec; stroke: #0f6cbd; } .g { fill: #c8c6c4; stroke: #777; } .w { fill: #fff; }
.num { font: 9.500px "Open Sans", sans-serif; fill: #1480c8; letter-spacing: 0; }
.let { font: 700 16px "Open Sans", sans-serif; fill: #2f86bd; letter-spacing: 0; }
.wells { position: relative; border-top: 1px solid #dddbd9; padding: 4px 6px 0 4px; height: 227px; }
.wells h4 { font-size: 12px; line-height: 26px; height: 26px; padding-left: 8px; }
.well { width: 170px; height: 28px; border: 1px dashed #c8c6c4; background: #fff; line-height: 27px; padding-left: 10px; margin-bottom: 6px; }
.well.tall { height: 37px; padding: 3px 2px; }
.chip { width: 164px; height: 23px; background: #edebe9; border: 1px solid #c0bebc; border-radius: 2px; display: flex; align-items: center; justify-content: space-between; padding: 0 4px; }
.chip svg { width: 26px; height: 10px; }
.scroll { position: absolute; right: 0; top: 3px; width: 6px; height: 96px; border-radius: 3px; background: #cfcdcb; }
.data { width: 181px; border-left: 1px solid #dddbd9; }
.data .phead { padding: 0 7px 7px 8px; height: 45px; }
.data .chev { margin-right: 1px; }
.ds { width: 172px; height: 27px; margin-left: 4px; padding-left: 6px; gap: 6px; }
.table { display: flex; align-items: center; padding: 12px 0 0 9px; }
.table svg { width: 32px; height: 20px; }
.status { height: 26px; border-top: 1px solid #dddbd9; border-bottom: 2px solid #111; display: flex; align-items: center; color: #444; line-height: 23px; }
.pg { width: 960px; padding-left: 5px; letter-spacing: -.2px; }
.slider { width: 124px; height: 12px; }
.zoom { width: 38px; margin-left: 17px; }
.fit { width: 16px; height: 12px; }
.upd { margin-left: 14px; white-space: nowrap; }
```
